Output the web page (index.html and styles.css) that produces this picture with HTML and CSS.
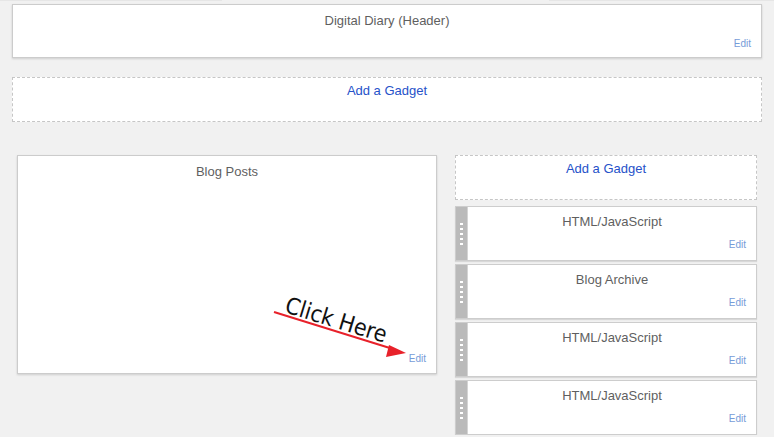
FILE: index.html
```html
<!DOCTYPE html>
<html lang="en">
<head>
  <meta charset="UTF-8">
  <title>Layout</title>
  <link rel="stylesheet" href="styles.css">
</head>
<body>

  <div class="top-edge">
    <span class="edge-left"></span>
    <span class="edge-right"></span>
  </div>

  <div class="page">
    <div class="widget header-widget">
      <div class="widget-title">Digital Diary (Header)</div>
      <a class="edit-link" href="#">Edit</a>
    </div>

    <div class="add-gadget wide">
      <a href="#">Add a Gadget</a>
    </div>

    <div class="columns">
      <div class="main-col">
        <div class="widget blog-posts">
          <div class="widget-title">Blog Posts</div>
          <a class="edit-link" href="#">Edit</a>
          <div class="click-here">Click Here</div>
          <svg class="arrow" width="420" height="219" viewBox="0 0 420 219">
            <line x1="257" y1="157" x2="376" y2="194" stroke="#e8212a" stroke-width="2"/>
            <polygon points="389,198 372,190 369,202" fill="#e8212a"/>
          </svg>
        </div>
      </div>

      <div class="side-col">
        <div class="add-gadget side">
          <a href="#">Add a Gadget</a>
        </div>

        <div class="gadget">
          <div class="handle"><span></span><span></span><span></span><span></span><span></span></div>
          <div class="gadget-body">
            <div class="widget-title">HTML/JavaScript</div>
            <a class="edit-link" href="#">Edit</a>
          </div>
        </div>
        <div class="gadget">
          <div class="handle"><span></span><span></span><span></span><span></span><span></span></div>
          <div class="gadget-body">
            <div class="widget-title">Blog Archive</div>
            <a class="edit-link" href="#">Edit</a>
          </div>
        </div>
        <div class="gadget">
          <div class="handle"><span></span><span></span><span></span><span></span><span></span></div>
          <div class="gadget-body">
            <div class="widget-title">HTML/JavaScript</div>
            <a class="edit-link" href="#">Edit</a>
          </div>
        </div>
        <div class="gadget">
          <div class="handle"><span></span><span></span><span></span><span></span><span></span></div>
          <div class="gadget-body">
            <div class="widget-title">HTML/JavaScript</div>
            <a class="edit-link" href="#">Edit</a>
          </div>
        </div>
      </div>
    </div>
  </div>

</body>
</html>
```

FILE: styles.css
```css
body {
  margin: 0;
  background: #f1f1f1;
  font-family: 'Liberation Sans', Arial, sans-serif;
  font-size: 13px;
  color: #5f5f5f;
}
.top-edge {
  display: flex;
  justify-content: space-between;
  height: 1px;
}
.top-edge span {
  background: #e6e6e6;
}
.edge-left {
  width: 222px;
}
.edge-right {
  width: 225px;
}
.page {
  padding: 3px 12px 0 12px;
}
.widget {
  position: relative;
  background: #fff;
  border: 1px solid #ccc;
  box-shadow: 0 1px 2px rgba(0,0,0,0.15);
  box-sizing: border-box;
  text-align: center;
}
.widget-title {
  padding-top: 8px;
  line-height: 15px;
}
.edit-link {
  position: absolute;
  right: 10px;
  bottom: 10px;
  font-size: 10px;
  line-height: 12px;
  color: #769cd8;
  text-decoration: none;
}
.header-widget {
  height: 54px;
}
.header-widget .edit-link {
  bottom: 7px;
}
.add-gadget {
  background: #fff;
  border: 1px dashed #c6c6c6;
  box-sizing: border-box;
  text-align: center;
  height: 45px;
}
.add-gadget a {
  display: block;
  padding-top: 5px;
  line-height: 16px;
  color: #2652c9;
  text-decoration: none;
}
.add-gadget.wide {
  margin-top: 19px;
}
.columns {
  display: flex;
  justify-content: space-between;
  margin-top: 33px;
  padding: 0 5px 0 5px;
}
.main-col {
  width: 420px;
}
.blog-posts {
  height: 219px;
}
.blog-posts .edit-link {
  bottom: 8px;
}
.click-here {
  position: absolute;
  left: 272px;
  top: 136px;
  font-family: 'DejaVu Sans Condensed', 'DejaVu Sans', sans-serif;
  font-size: 23px;
  line-height: 26px;
  color: #111;
  white-space: nowrap;
  transform: rotate(17deg);
  transform-origin: left top;
}
.arrow {
  position: absolute;
  left: -1px;
  top: -1px;
}
.side-col {
  width: 302px;
  display: flex;
  flex-direction: column;
  gap: 3px;
}
.add-gadget.side {
  margin-bottom: 3px;
}
.gadget {
  display: flex;
  height: 55px;
  border: 1px solid #cdcdcd;
  box-sizing: border-box;
  box-shadow: 0 1px 1px rgba(0,0,0,0.1);
  background: #fff;
}
.handle {
  width: 11px;
  background: #bababa;
  display: flex;
  flex-direction: column;
  align-items: center;
  gap: 3px;
  padding-top: 16px;
  box-sizing: border-box;
}
.handle span {
  width: 3px;
  height: 2px;
  background: #fff;
}
.gadget-body {
  position: relative;
  flex: 1;
  text-align: center;
  border-left: 1px solid #d4d4d4;
}
.gadget-body .widget-title {
  padding-top: 7px;
}
.gadget-body .edit-link {
  bottom: 9px;
}
```
